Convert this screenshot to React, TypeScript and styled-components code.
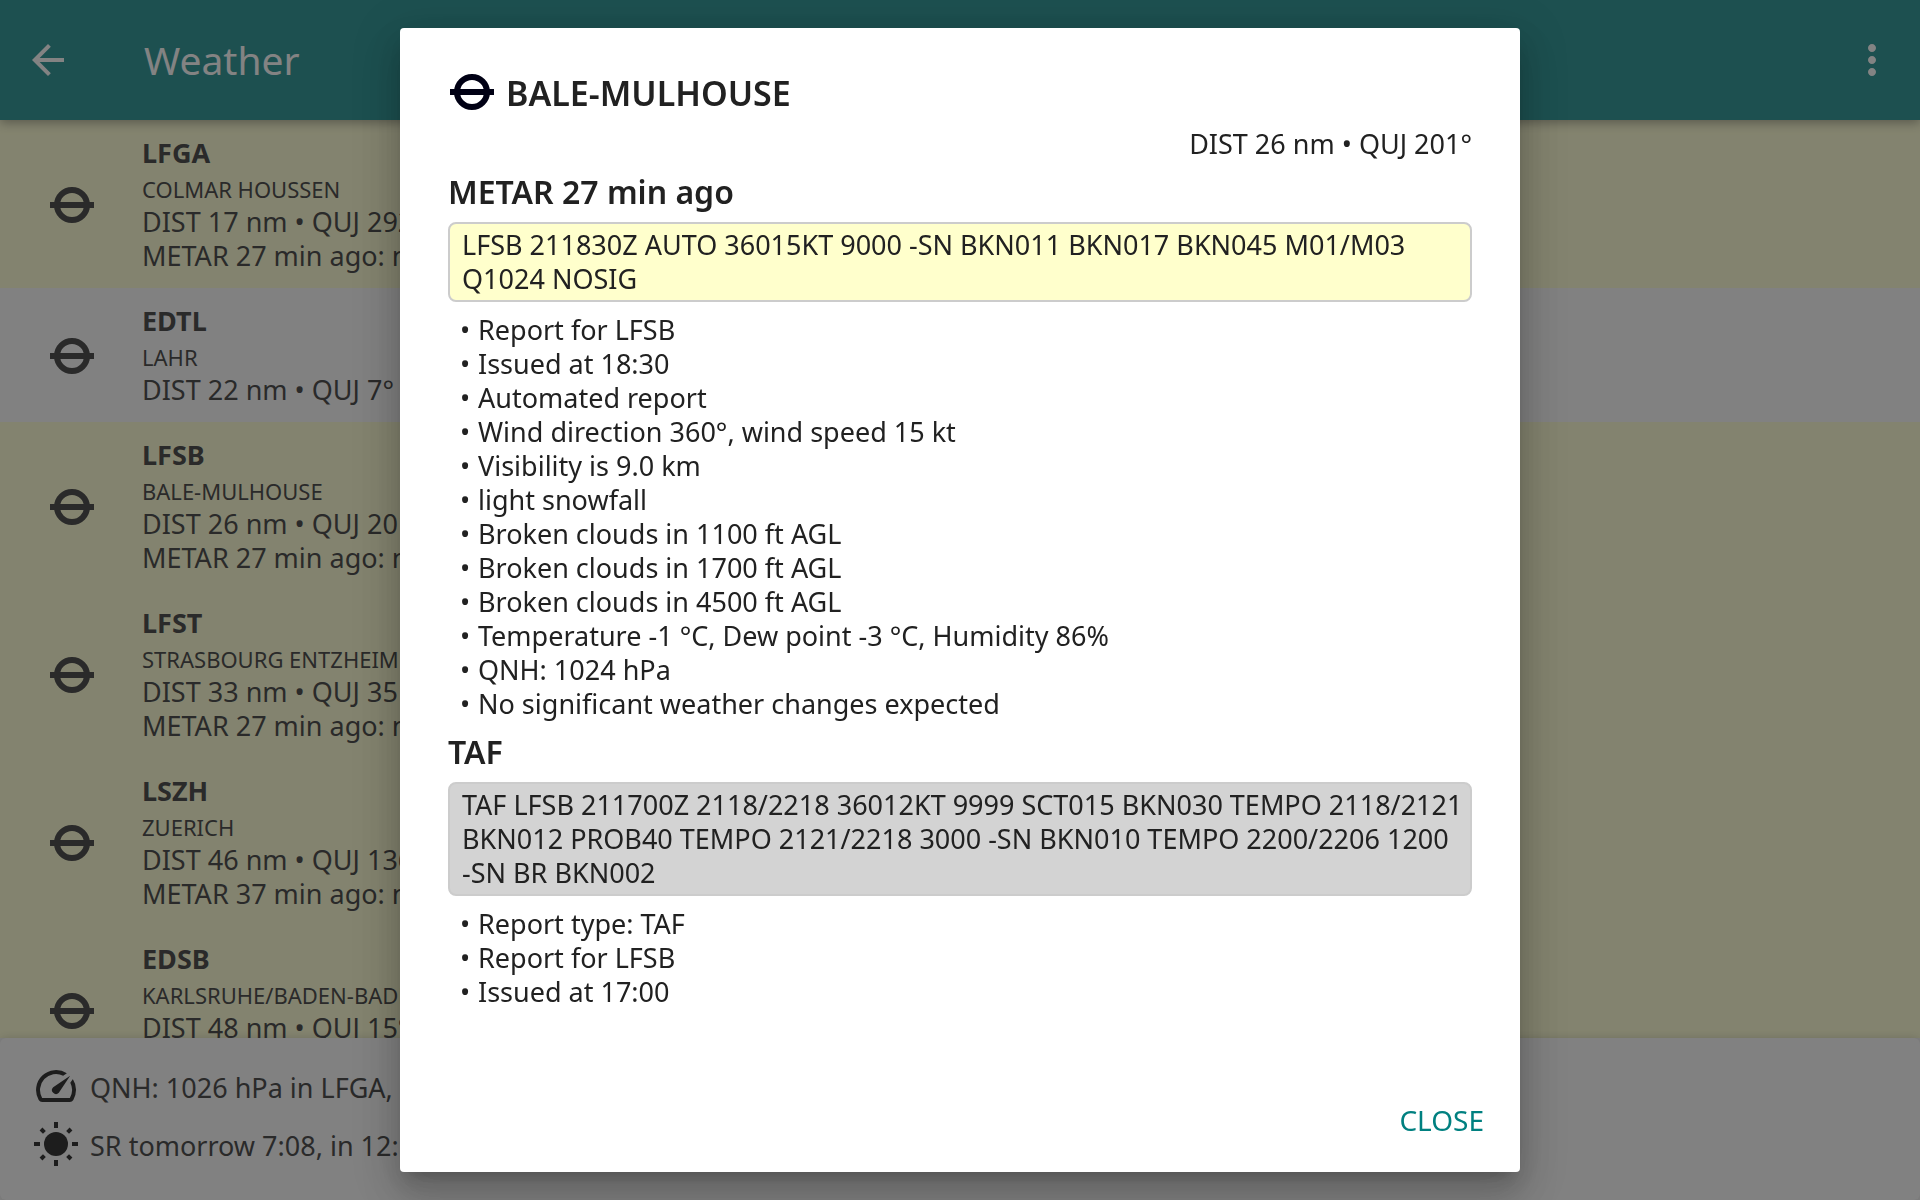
import React from "react";
import styled, { createGlobalStyle } from "styled-components";

const GlobalStyle = createGlobalStyle`
  * { box-sizing: border-box; }
  body {
    margin: 0;
    font-family: "Noto Sans", "Open Sans", sans-serif;
    font-size: 27px;
    line-height: 34px;
    color: #212121;
    background: #fafafa;
  }
  h1, h2, h3, p, ul { margin: 0; padding: 0; }
`;

const Page = styled.div`
  display: flex;
  flex-direction: column;
  height: 100vh;
  overflow: hidden;
`;

const AppBar = styled.header`
  display: flex;
  align-items: center;
  flex: none;
  height: 120px;
  padding: 0 24px;
  gap: 72px;
  color: #ffffff;
  background: #008080;
  z-index: 1;
  box-shadow: 0 3px 10px rgba(0, 0, 0, 0.4);
`;

const AppTitle = styled.h1`
  flex: 1;
  font-size: 39px;
  font-weight: 400;
  line-height: 48px;
`;

const IconButton = styled.button`
  display: flex;
  padding: 0;
  border: 0;
  color: inherit;
  background: none;
`;

const StationList = styled.ul`
  flex: 1;
  min-height: 0;
  overflow: hidden;
  list-style: none;
`;

const StationRow = styled.li<{ $marginal: boolean }>`
  display: flex;
  align-items: center;
  gap: 46px;
  padding: 16px 48px 15px;
  white-space: nowrap;
  background: ${(p) => (p.$marginal ? "#ffffcc" : "#fafafa")};
`;

const StationCode = styled.h2`
  font-size: 27px;
  font-weight: 700;
  line-height: 34px;
`;

const StationName = styled.p`
  padding: 4px 0 1px;
  font-size: 22px;
  line-height: 30px;
`;

const Footer = styled.footer`
  display: flex;
  flex-direction: column;
  flex: none;
  gap: 10px;
  padding: 24px 32px 32px;
  border-radius: 6px;
  background: #fafafa;
  z-index: 1;
  box-shadow: 0 0 8px rgba(0, 0, 0, 0.2);
`;

const FooterRow = styled.div`
  display: flex;
  align-items: center;
  gap: 10px;
  white-space: nowrap;
`;

const FooterText = styled.span`
  padding-top: 3px;
`;

const FooterIcon = styled.span`
  display: flex;
  color: #000000;
`;

const Dim = styled.div`
  position: fixed;
  inset: 0;
  z-index: 2;
  display: flex;
  justify-content: center;
  padding: 28px;
  background: rgba(48, 48, 48, 0.6);
`;

const Dialog = styled.section`
  display: flex;
  flex-direction: column;
  width: 100%;
  max-width: 1120px;
  border-radius: 4px;
  background: #ffffff;
  box-shadow: 0 11px 15px -7px rgba(0, 0, 0, 0.2), 0 24px 38px 3px rgba(0, 0, 0, 0.14),
    0 9px 46px 8px rgba(0, 0, 0, 0.12);
`;

const DialogBody = styled.div`
  flex: 1;
  min-height: 0;
  overflow: hidden;
  padding: 40px 48px 0;
`;

const DialogHeader = styled.div`
  display: flex;
  align-items: center;
  gap: 10px;
  color: #000014;
`;

const DialogTitle = styled.h2`
  padding-top: 2px;
  font-size: 34px;
  font-weight: 600;
  line-height: 46px;
  color: #212121;
`;

const Distance = styled.p`
  padding: 11px 0 1px;
  text-align: right;
`;

const SectionTitle = styled.h3`
  padding: 9px 0;
  font-size: 32px;
  font-weight: 600;
  line-height: 42px;
`;

const RawReport = styled.p<{ $marginal?: boolean }>`
  padding: 4px 0 4px 12px;
  border: 2px solid #cccccc;
  border-radius: 8px;
  background: ${(p) => (p.$marginal ? "#ffffcc" : "#d3d3d3")};
`;

const Group = styled.span`
  white-space: nowrap;
`;

const Decoded = styled.ul`
  padding: 11px 12px 1px;
  list-style: none;
`;

const DecodedItem = styled.li`
  display: flex;
`;

const Bullet = styled.span`
  width: 18px;
`;

const DialogActions = styled.div`
  display: flex;
  justify-content: flex-end;
  padding: 0 24px 28px;
`;

const TextButton = styled.button`
  padding: 7px 12px;
  border: 0;
  font: inherit;
  font-size: 28px;
  color: #008080;
  background: none;
`;

const Icon = ({ children }: { children: React.ReactNode }) => (
  <svg width="48" height="48" viewBox="0 0 24 24" fill="currentColor" aria-hidden="true">
    {children}
  </svg>
);

const AirfieldIcon = () => (
  <Icon>
    <circle cx="12" cy="12" r="7.5" fill="none" stroke="currentColor" strokeWidth="3" />
    <path d="M1 10.5h22v3H1z" />
  </Icon>
);

const BackIcon = () => (
  <Icon>
    <path d="M20 11H7.83l5.59-5.59L12 4l-8 8 8 8 1.41-1.41L7.83 13H20v-2z" />
  </Icon>
);

const MoreIcon = () => (
  <Icon>
    <path d="M12 8c1.1 0 2-.9 2-2s-.9-2-2-2-2 .9-2 2 .9 2 2 2zm0 2c-1.1 0-2 .9-2 2s.9 2 2 2 2-.9 2-2-.9-2-2-2zm0 6c-1.1 0-2 .9-2 2s.9 2 2 2 2-.9 2-2-.9-2-2-2z" />
  </Icon>
);

const GaugeIcon = () => (
  <Icon>
    <path d="M20.38 8.57l-1.23 1.85a8 8 0 0 1-.22 7.58H5.07A8 8 0 0 1 15.58 6.85l1.85-1.23A10 10 0 0 0 3.35 19a2 2 0 0 0 1.72 1h13.85a2 2 0 0 0 1.74-1 10 10 0 0 0-.27-10.44zm-9.79 6.84a2 2 0 0 0 2.83 0l5.66-8.49-8.49 5.66a2 2 0 0 0 0 2.83z" />
  </Icon>
);

const SunIcon = () => (
  <Icon>
    <circle cx="12" cy="12" r="6" />
    <path d="M11 1h2v3h-2zM11 20h2v3h-2zM1 11h3v2H1zM20 11h3v2h-3z" />
    <path
      d="M4.5 4.5l1.7 1.7M19.5 4.5l-1.7 1.7M4.5 19.5l1.7-1.7M19.5 19.5l-1.7-1.7"
      stroke="currentColor"
      strokeWidth="2"
    />
  </Icon>
);

type Station = { code: string; name: string; position: string; report?: string };

const stations: Station[] = [
  { code: "LFGA", name: "COLMAR HOUSSEN", position: "DIST 17 nm • QUJ 292°", report: "METAR 27 min ago: marginal VMC" },
  { code: "EDTL", name: "LAHR", position: "DIST 22 nm • QUJ 7°" },
  { code: "LFSB", name: "BALE-MULHOUSE", position: "DIST 26 nm • QUJ 201°", report: "METAR 27 min ago: marginal VMC" },
  { code: "LFST", name: "STRASBOURG ENTZHEIM", position: "DIST 33 nm • QUJ 351°", report: "METAR 27 min ago: marginal VMC" },
  { code: "LSZH", name: "ZUERICH", position: "DIST 46 nm • QUJ 136°", report: "METAR 37 min ago: marginal VMC" },
  { code: "EDSB", name: "KARLSRUHE/BADEN-BADEN", position: "DIST 48 nm • QUJ 15°", report: "METAR 37 min ago: marginal VMC" },
];

const metarLines = [
  "Report for LFSB",
  "Issued at 18:30",
  "Automated report",
  "Wind direction 360°, wind speed 15 kt",
  "Visibility is 9.0 km",
  "light snowfall",
  "Broken clouds in 1100 ft AGL",
  "Broken clouds in 1700 ft AGL",
  "Broken clouds in 4500 ft AGL",
  "Temperature -1 °C, Dew point -3 °C, Humidity 86%",
  "QNH: 1024 hPa",
  "No significant weather changes expected",
];

const tafLines = ["Report type: TAF", "Report for LFSB", "Issued at 17:00"];

const DecodedList = ({ lines }: { lines: string[] }) => (
  <Decoded>
    {lines.map((line) => (
      <DecodedItem key={line}>
        <Bullet>•</Bullet>
        <span>{line}</span>
      </DecodedItem>
    ))}
  </Decoded>
);

export default function App() {
  return (
    <>
      <GlobalStyle />
      <Page>
        <AppBar>
          <IconButton type="button" aria-label="Back">
            <BackIcon />
          </IconButton>
          <AppTitle>Weather</AppTitle>
          <IconButton type="button" aria-label="Menu">
            <MoreIcon />
          </IconButton>
        </AppBar>
        <StationList>
          {stations.map((s) => (
            <StationRow key={s.code} $marginal={Boolean(s.report)}>
              <AirfieldIcon />
              <div>
                <StationCode>{s.code}</StationCode>
                <StationName>{s.name}</StationName>
                <p>{s.position}</p>
                {s.report && <p>{s.report}</p>}
              </div>
            </StationRow>
          ))}
        </StationList>
        <Footer>
          <FooterRow>
            <FooterIcon>
              <GaugeIcon />
            </FooterIcon>
            <FooterText>QNH: 1026 hPa in LFGA, 27 min ago</FooterText>
          </FooterRow>
          <FooterRow>
            <FooterIcon>
              <SunIcon />
            </FooterIcon>
            <FooterText>SR tomorrow 7:08, in 12:11 h</FooterText>
          </FooterRow>
        </Footer>
      </Page>
      <Dim>
        <Dialog role="dialog" aria-modal="true" aria-labelledby="station-title">
          <DialogBody>
            <DialogHeader>
              <AirfieldIcon />
              <DialogTitle id="station-title">BALE-MULHOUSE</DialogTitle>
            </DialogHeader>
            <Distance>DIST 26 nm • QUJ 201°</Distance>
            <SectionTitle>METAR 27 min ago</SectionTitle>
            <RawReport $marginal>
              LFSB 211830Z AUTO 36015KT 9000 -SN BKN011 BKN017 BKN045 M01/M03 Q1024 NOSIG
            </RawReport>
            <DecodedList lines={metarLines} />
            <SectionTitle>TAF</SectionTitle>
            <RawReport>
              TAF LFSB 211700Z 2118/2218 36012KT 9999 SCT015 BKN030 TEMPO 2118/2121 BKN012 PROB40 TEMPO
              2121/2218 3000 -SN BKN010 TEMPO 2200/2206 1200 <Group>-SN</Group> BR BKN002
            </RawReport>
            <DecodedList lines={tafLines} />
          </DialogBody>
          <DialogActions>
            <TextButton type="button">CLOSE</TextButton>
          </DialogActions>
        </Dialog>
      </Dim>
    </>
  );
}
